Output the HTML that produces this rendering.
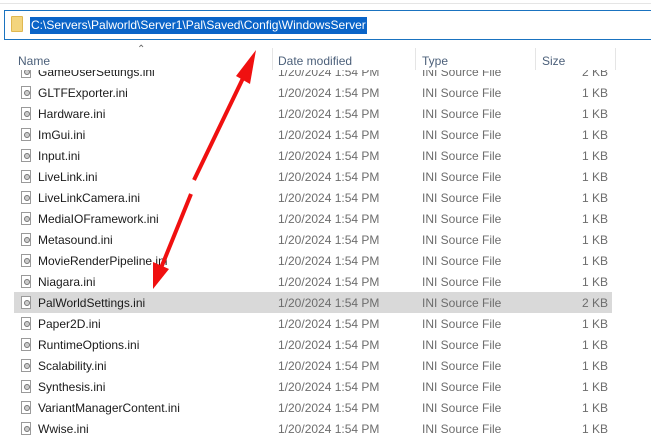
<!DOCTYPE html>
<html><head><meta charset="utf-8">
<style>
*{margin:0;padding:0;box-sizing:border-box}
html,body{width:651px;height:445px;overflow:hidden;background:#fff;font-family:"Liberation Sans",sans-serif;position:relative}
.topline{position:absolute;left:0;top:0;width:651px;height:4px;border-bottom:1px solid #e5e5e5;background:#fff}
.addr{position:absolute;left:4px;top:10px;width:660px;height:30px;border:1px solid #1a73c0;border-right:none;background:#fff}
.addr .fold{position:absolute;left:6px;top:5px;width:12px;height:16px;background:#f3d57e;border:1px solid #e0b850;border-radius:1px}
.addr .path{position:absolute;left:25px;top:6px;height:17px;line-height:17px;background:#0a64c8;color:#fff;font-size:12px;padding:0 1px;letter-spacing:0}
.hdr{position:absolute;top:54px;font-size:12px;color:#4c607a}
.div{position:absolute;top:48px;width:1px;height:22px;background:#e5e5e5}
.caret{position:absolute;left:137px;top:44px;font-size:10px;color:#666}
.list{position:absolute;left:0;top:70px;width:651px;height:375px;overflow:hidden}
.row{position:absolute;left:14px;width:598px;height:21px;font-size:12px;color:#1a1a1a}
.row.sel{background:#d9d9d9}
.row .ic{position:absolute;left:7px;top:4px;width:10px;height:13px;border:1px solid #9a9a9a;background:#fff}
.row .ic::after{content:"";position:absolute;left:2px;top:3px;width:4px;height:4px;border-radius:50%;border:1px solid #777;background:#ccc}
.row .n{position:absolute;left:24px;top:4px;white-space:nowrap}
.row .d{position:absolute;left:264px;top:4px;color:#6d6d6d;white-space:nowrap}
.row .t{position:absolute;left:408px;top:4px;color:#6d6d6d;white-space:nowrap}
.row .s{position:absolute;right:4px;top:4px;color:#6d6d6d}
svg{position:absolute;left:0;top:0}
</style></head><body>
<div class="topline"></div>
<div class="addr"><div class="fold"></div><div class="path">C:\Servers\Palworld\Server1\Pal\Saved\Config\WindowsServer</div></div>
<div class="caret">&#8963;</div>
<div class="hdr" style="left:18px">Name</div>
<div class="hdr" style="left:278px">Date modified</div>
<div class="hdr" style="left:422px">Type</div>
<div class="hdr" style="left:542px">Size</div>
<div class="div" style="left:272px"></div>
<div class="div" style="left:415px"></div>
<div class="div" style="left:535px"></div>
<div class="div" style="left:615px"></div>
<div class="list">
<div class="row" style="top:-9px"><div class="ic"></div><div class="n">GameUserSettings.ini</div><div class="d">1/20/2024 1:54 PM</div><div class="t">INI Source File</div><div class="s">2 KB</div></div>
<div class="row" style="top:12px"><div class="ic"></div><div class="n">GLTFExporter.ini</div><div class="d">1/20/2024 1:54 PM</div><div class="t">INI Source File</div><div class="s">1 KB</div></div>
<div class="row" style="top:33px"><div class="ic"></div><div class="n">Hardware.ini</div><div class="d">1/20/2024 1:54 PM</div><div class="t">INI Source File</div><div class="s">1 KB</div></div>
<div class="row" style="top:54px"><div class="ic"></div><div class="n">ImGui.ini</div><div class="d">1/20/2024 1:54 PM</div><div class="t">INI Source File</div><div class="s">1 KB</div></div>
<div class="row" style="top:75px"><div class="ic"></div><div class="n">Input.ini</div><div class="d">1/20/2024 1:54 PM</div><div class="t">INI Source File</div><div class="s">1 KB</div></div>
<div class="row" style="top:96px"><div class="ic"></div><div class="n">LiveLink.ini</div><div class="d">1/20/2024 1:54 PM</div><div class="t">INI Source File</div><div class="s">1 KB</div></div>
<div class="row" style="top:117px"><div class="ic"></div><div class="n">LiveLinkCamera.ini</div><div class="d">1/20/2024 1:54 PM</div><div class="t">INI Source File</div><div class="s">1 KB</div></div>
<div class="row" style="top:138px"><div class="ic"></div><div class="n">MediaIOFramework.ini</div><div class="d">1/20/2024 1:54 PM</div><div class="t">INI Source File</div><div class="s">1 KB</div></div>
<div class="row" style="top:159px"><div class="ic"></div><div class="n">Metasound.ini</div><div class="d">1/20/2024 1:54 PM</div><div class="t">INI Source File</div><div class="s">1 KB</div></div>
<div class="row" style="top:180px"><div class="ic"></div><div class="n">MovieRenderPipeline.ini</div><div class="d">1/20/2024 1:54 PM</div><div class="t">INI Source File</div><div class="s">1 KB</div></div>
<div class="row" style="top:201px"><div class="ic"></div><div class="n">Niagara.ini</div><div class="d">1/20/2024 1:54 PM</div><div class="t">INI Source File</div><div class="s">1 KB</div></div>
<div class="row sel" style="top:222px"><div class="ic"></div><div class="n">PalWorldSettings.ini</div><div class="d">1/20/2024 1:54 PM</div><div class="t">INI Source File</div><div class="s">2 KB</div></div>
<div class="row" style="top:243px"><div class="ic"></div><div class="n">Paper2D.ini</div><div class="d">1/20/2024 1:54 PM</div><div class="t">INI Source File</div><div class="s">1 KB</div></div>
<div class="row" style="top:264px"><div class="ic"></div><div class="n">RuntimeOptions.ini</div><div class="d">1/20/2024 1:54 PM</div><div class="t">INI Source File</div><div class="s">1 KB</div></div>
<div class="row" style="top:285px"><div class="ic"></div><div class="n">Scalability.ini</div><div class="d">1/20/2024 1:54 PM</div><div class="t">INI Source File</div><div class="s">1 KB</div></div>
<div class="row" style="top:306px"><div class="ic"></div><div class="n">Synthesis.ini</div><div class="d">1/20/2024 1:54 PM</div><div class="t">INI Source File</div><div class="s">1 KB</div></div>
<div class="row" style="top:327px"><div class="ic"></div><div class="n">VariantManagerContent.ini</div><div class="d">1/20/2024 1:54 PM</div><div class="t">INI Source File</div><div class="s">1 KB</div></div>
<div class="row" style="top:348px"><div class="ic"></div><div class="n">Wwise.ini</div><div class="d">1/20/2024 1:54 PM</div><div class="t">INI Source File</div><div class="s">1 KB</div></div>
</div>
<svg width="651" height="445">
<line x1="194" y1="180" x2="246" y2="72" stroke="#f01010" stroke-width="4"/>
<polygon points="256,50 250,84 236,76" fill="#f01010"/>
<line x1="191" y1="194" x2="161" y2="268" stroke="#f01010" stroke-width="4"/>
<polygon points="153,289 153,262 169,269" fill="#f01010"/>
</svg>
</body></html>
